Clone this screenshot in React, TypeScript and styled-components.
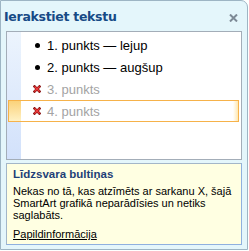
import React from "react";
import styled, { createGlobalStyle } from "styled-components";

const GlobalStyle = createGlobalStyle`
  html, body {
    margin: 0;
    padding: 0;
    background: #ffffff;
  }
  body {
    font-family: "Liberation Sans", Arial, sans-serif;
  }
`;

type Item = { label: string; hidden: boolean };

const items: Item[] = [
  { label: "1. punkts — lejup", hidden: false },
  { label: "2. punkts — augšup", hidden: false },
  { label: "3. punkts", hidden: true },
  { label: "4. punkts", hidden: true },
];

const selectedIndex = 3;

const CloseIcon = () => (
  <svg width="9" height="8" viewBox="0 0 9 8">
    <path d="M1 0.5 L8 7.5 M8 0.5 L1 7.5" stroke="#7d8a96" strokeWidth="2" />
  </svg>
);

const HiddenMark = () => (
  <svg width="8" height="8" viewBox="0 0 8 8">
    <path d="M1.5 1.5 L6.5 6.5 M6.5 1.5 L1.5 6.5" stroke="#8a1515" strokeWidth="2.6" strokeLinecap="square" />
    <path d="M1.5 1.5 L6.5 6.5 M6.5 1.5 L1.5 6.5" stroke="#f23a3a" strokeWidth="1.2" />
  </svg>
);

const App = () => {
  return (
    <>
      <GlobalStyle />
      <Window>
        <TitleBar>
          <Title>Ierakstiet tekstu</Title>
          <CloseButton>
            <CloseIcon />
          </CloseButton>
        </TitleBar>
        <TextPanel>
          {items.map((item, i) => (
            <Row key={item.label} $selected={i === selectedIndex}>
              <Marker>{item.hidden ? <HiddenMark /> : <Dot />}</Marker>
              <RowText $hidden={item.hidden}>{item.label}</RowText>
            </Row>
          ))}
        </TextPanel>
        <InfoPanel>
          <InfoTitle>Līdzsvara bultiņas</InfoTitle>
          <InfoText>
            Nekas no tā, kas atzīmēts ar sarkanu X, šajā SmartArt grafikā
            neparādīsies un netiks saglabāts.
          </InfoText>
          <InfoLink href="#">Papildinformācija</InfoLink>
        </InfoPanel>
      </Window>
    </>
  );
};

const Window = styled.div`
  box-sizing: border-box;
  width: 248px;
  height: 250px;
  display: flex;
  flex-direction: column;
  padding: 0 5px 4px 5px;
  background: #e4f6fb;
  border: 1px solid #9db5c4;
  border-radius: 0 7px 0 0;
`;

const TitleBar = styled.div`
  height: 30px;
  display: flex;
  align-items: center;
  justify-content: space-between;
  padding: 0 4px 0 0;
  margin-left: -2px;
`;

const Title = styled.h1`
  margin: 0;
  font-family: "DejaVu Sans", Verdana, sans-serif;
  font-size: 12.5px;
  font-weight: bold;
  color: #174a86;
  letter-spacing: -0.3px;
`;

const CloseButton = styled.div`
  display: flex;
  padding-top: 3px;
`;

const TextPanel = styled.div`
  box-sizing: border-box;
  height: 129px;
  padding: 2px 2px 0 1px;
  border: 1px solid #a3adb8;
  background-color: #ffffff;
  background-image: linear-gradient(to bottom, #ecf4fd, #d2e1fb);
  background-size: 14px 100%;
  background-repeat: no-repeat;
  display: flex;
  flex-direction: column;
`;

const Row = styled.div<{ $selected: boolean }>`
  box-sizing: border-box;
  height: 22px;
  display: flex;
  align-items: center;
  padding-left: 23px;
  border: 1px solid ${(p) => (p.$selected ? "#f6b24a" : "transparent")};
  background: ${(p) =>
    p.$selected
      ? "linear-gradient(to bottom, #fbd27a, #fff1c4) 0 0 / 12px 100% no-repeat, linear-gradient(to left, #ffe8b0, #ffffff 5px) #ffffff"
      : "transparent"};
`;

const Marker = styled.span`
  width: 10px;
  display: flex;
  align-items: center;
  justify-content: center;
  margin-right: 5px;
`;

const Dot = styled.span`
  width: 5px;
  height: 5px;
  border-radius: 50%;
  background: #000000;
`;

const RowText = styled.span<{ $hidden: boolean }>`
  font-family: "Liberation Sans", Arial, sans-serif;
  font-size: 13px;
  color: ${(p) => (p.$hidden ? "#a3a3a3" : "#000000")};
`;

const InfoPanel = styled.div`
  box-sizing: border-box;
  flex: 1;
  margin-top: 3px;
  padding: 4px 6px 0 6px;
  background: #ffffe2;
  border: 1px solid #a3b6c8;
  border-right-color: #8fb0df;
  border-bottom-color: #8fb0df;
  font-family: "Liberation Sans", Arial, sans-serif;
  font-size: 11px;
`;

const InfoTitle = styled.div`
  font-weight: bold;
  font-size: 11.5px;
  color: #1e3f78;
  margin-bottom: 5px;
`;

const InfoText = styled.p`
  margin: 0 0 7px 0;
  line-height: 12px;
  color: #000000;
`;

const InfoLink = styled.a`
  color: #000000;
  text-decoration: underline;
`;

export default App;
